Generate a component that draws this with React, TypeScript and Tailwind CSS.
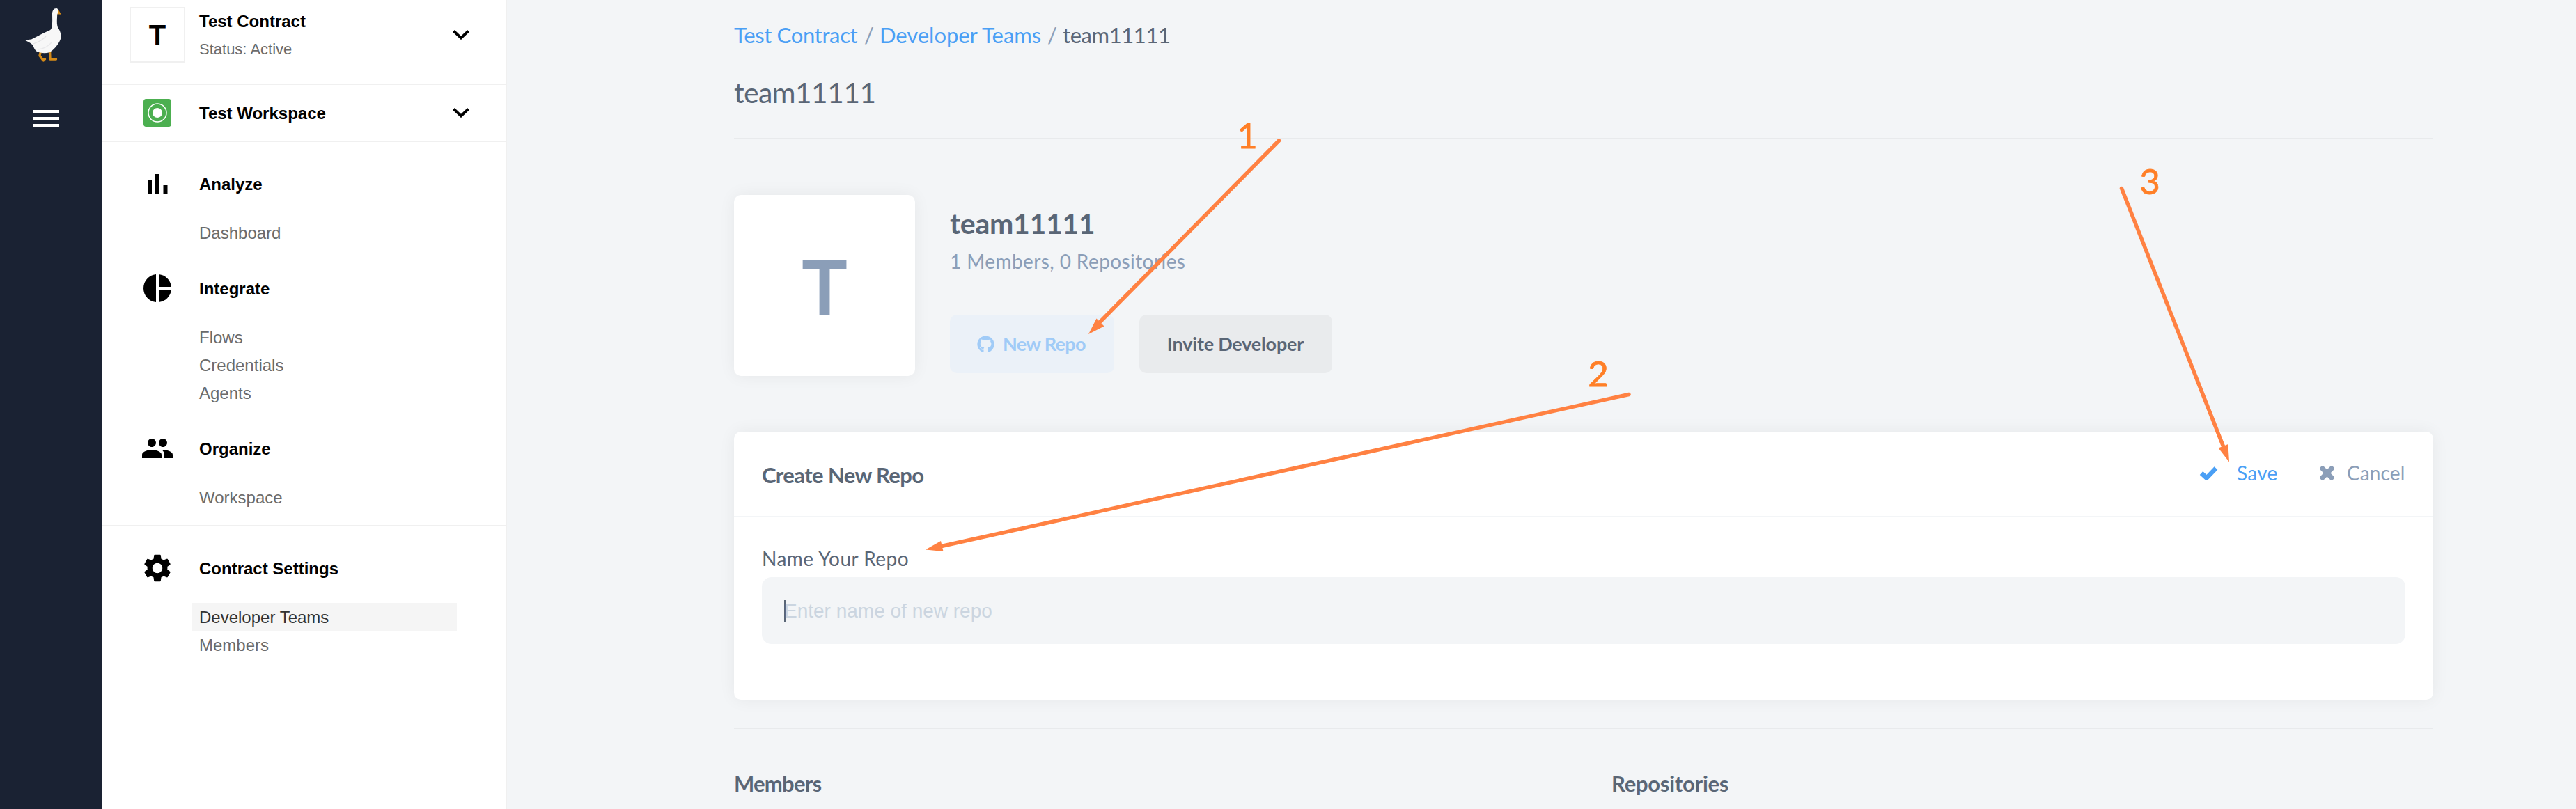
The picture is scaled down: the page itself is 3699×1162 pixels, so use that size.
import React from "react";
import { FaGithub } from "react-icons/fa";
import { MdPieChart, MdPeople, MdSettings } from "react-icons/md";

function Goose() {
  return (
    <svg viewBox="0 0 146 100" className="h-[100px] w-[146px] shrink-0">
      <g fill="none" stroke="#d48a18" strokeWidth="3.4" strokeLinecap="round" strokeLinejoin="round">
        <path d="M58.500 73 L57 80 L61.500 86 L64.500 85 M61 85 L62.500 87" />
        <path d="M71.500 73 L72 85 L80.500 85" />
      </g>
      <path d="M81.500 13.200 L84.500 15 L87.800 20.700 L82 20.300 Z" fill="#d48a18" />
      <path
        d="M81.500 12 C77.500 11.500 75 15 75 20 C75 27 75.500 32 74.500 38 C74 42 72.500 43.500 68 45 C60 48.500 52 53 45 56.500 L35.500 57.500 L43 61.500 L47 64.500 C48.500 68 49.500 71.500 52.500 73.800 C58 76.500 65 77 71 75.300 C77 72 84 64 87 56 C88.300 48 86 44 82.500 38 C81.300 33 82 27 82.200 21 C83.500 17.500 84.500 13 81.500 12 Z"
        fill="#f7f7f7"
      />
      <path d="M48 63 C55 60 60 59 66 52" fill="none" stroke="#e4e4e6" strokeWidth="1.200" />
      <path d="M55 71 C63 70 70 66 75 60" fill="none" stroke="#e9e9eb" strokeWidth="1.200" />
    </svg>
  );
}

function Chevron() {
  return (
    <svg viewBox="0 0 24 14" className="h-[14px] w-6" fill="none" stroke="#000" strokeWidth="3.800">
      <path d="M1.500 1.500 L12 11.500 L22.500 1.500" />
    </svg>
  );
}

function BarsIcon() {
  return (
    <svg viewBox="0 0 48 48" className="size-12">
      <path d="M10 18h6v20h-6zM21 10h6v28h-6zM32.500 26h6v12h-6z" fill="#000" />
    </svg>
  );
}

type Section = { title: string; icon: React.ReactNode; items: string[] };

function NavSection({ title, icon, items, active }: Section & { active?: string }) {
  return (
    <section>
      <div className="flex h-10 items-center text-2xl font-bold text-black">
        <span className="ml-[56px] flex w-[84px] shrink-0 items-center">{icon}</span>
        <span className="pt-[2px]">{title}</span>
      </div>
      <ul className="mt-[30px] mr-[70px] ml-[130px]">
        {items.map((item) => (
          <li
            key={item}
            className={
              item === active
                ? "flex h-10 items-center bg-[#f5f5f5] pt-[2px] pl-[10px] text-2xl text-[#333]"
                : "flex h-10 items-center pt-[2px] pl-[10px] text-2xl text-[#6b6b6b]"
            }
          >
            {item}
          </li>
        ))}
      </ul>
    </section>
  );
}

function Sidebar() {
  return (
    <aside className="flex w-[582px] shrink-0 flex-col border-r-2 border-[#f0f0f0] bg-white font-['Liberation_Sans',sans-serif]">
      <div className="flex h-[122px] border-b-2 border-[#f0f0f0] pt-[10px] pr-[52px] pl-10">
        <div className="flex size-20 items-center justify-center border-2 border-[#f0f0f0] text-[40px] font-bold text-black">T</div>
        <div className="ml-[20px] flex flex-1 flex-col">
          <span className="mt-px h-10 text-2xl leading-10 font-bold text-black">Test Contract</span>
          <span className="h-10 text-[22px] leading-10 text-[#6b6b6b]">Status: Active</span>
        </div>
        <div className="pt-[33px]">
          <Chevron />
        </div>
      </div>
      <div className="flex h-[82px] items-center border-b-2 border-[#f0f0f0] pr-[52px] pl-[60px]">
        <svg viewBox="0 0 40 40" className="size-10">
          <rect width="40" height="40" rx="4" fill="#4caf50" />
          <circle cx="20" cy="20" r="13" fill="none" stroke="#fff" strokeWidth="1.500" />
          <circle cx="20" cy="20" r="7" fill="#fff" />
        </svg>
        <span className="ml-10 flex-1 pt-[2px] text-2xl font-bold text-black">Test Workspace</span>
        <Chevron />
      </div>
      <nav className="flex flex-col gap-10 border-b-2 border-[#f0f0f0] pt-10 pb-5">
        <NavSection title="Analyze" icon={<BarsIcon />} items={["Dashboard"]} />
        <NavSection title="Integrate" icon={<MdPieChart className="size-12" />} items={["Flows", "Credentials", "Agents"]} />
        <NavSection title="Organize" icon={<MdPeople className="size-12" />} items={["Workspace"]} />
      </nav>
      <nav className="pt-10">
        <NavSection
          title="Contract Settings"
          icon={<MdSettings className="size-12" />}
          items={["Developer Teams", "Members"]}
          active="Developer Teams"
        />
      </nav>
    </aside>
  );
}

function CheckIcon() {
  return (
    <svg viewBox="0 0 27 21" className="h-[21px] w-[27px]">
      <path d="M3 10.500 L10.500 17.500 L24 3.500" fill="none" stroke="#4a9ff5" strokeWidth="6.500" />
    </svg>
  );
}

function CrossIcon() {
  return (
    <svg viewBox="0 0 21 21" className="size-[21px]">
      <path d="M4 4 L17 17 M17 4 L4 17" fill="none" stroke="#8b9eb8" strokeWidth="7" strokeLinecap="round" />
    </svg>
  );
}

function Annotations() {
  return (
    <>
      <svg viewBox="0 0 3699 1162" className="pointer-events-none absolute inset-0 h-full w-full">
        <g stroke="#ff8142" strokeWidth="5.500" strokeLinecap="round">
          <path d="M1836.500 202 L1578 464" />
          <path d="M2339 566.500 L1352 784.500" />
          <path d="M3046.500 270.500 L3192.500 641" />
        </g>
        <g fill="#ff8142">
          <path d="M1563 480 L1574.500 457.500 L1585.500 468.500 Z" />
          <path d="M1329 789.500 L1351 777 L1354.500 792 Z" />
          <path d="M3201 663.500 L3185.500 643.500 L3199.500 638 Z" />
        </g>
      </svg>
      <div className="text-center text-[51px] leading-[60px] text-[#ff7f27] [-webkit-text-stroke:0.8px_#ff7f27]">
        <span className="absolute top-[164px] left-[1775px] w-8">1</span>
        <span className="absolute top-[506px] left-[2279px] w-8">2</span>
        <span className="absolute top-[230px] left-[3071px] w-8">3</span>
      </div>
    </>
  );
}

export default function App() {
  return (
    <div className="relative flex h-[1162px] w-[3699px] overflow-hidden bg-[#f3f5f7] font-[Lato,sans-serif] text-[#5a6676]">
      <div className="flex w-[146px] shrink-0 flex-col bg-[#1a2233]">
        <Goose />
        <div className="mt-[58px] ml-12 flex w-[37px] flex-col gap-[6px]">
          <span className="h-1 bg-white" />
          <span className="h-1 bg-white" />
          <span className="h-1 bg-white" />
        </div>
      </div>
      <Sidebar />
      <main className="mr-[205px] ml-[326px] flex flex-1 flex-col">
        <div className="mt-[30px] flex h-10 shrink-0 text-[31px] leading-10 whitespace-nowrap">
          <a className="w-[187px] tracking-[-0.35px] text-[#4a9ff5]">Test Contract</a>
          <span className="w-[22px] text-[#8b9eb8]">/</span>
          <a className="w-[241px] tracking-[-0.05px] text-[#4a9ff5]">Developer Teams</a>
          <span className="w-[22px] text-[#8b9eb8]">/</span>
          <span className="tracking-[-0.4px]">team11111</span>
        </div>
        <h1 className="mt-[33px] h-[60px] shrink-0 text-[41px] leading-[60px] tracking-[-0.65px]">team11111</h1>
        <hr className="mt-[35px] h-[2px] shrink-0 border-0 bg-[#e8eaec]" />

        <div className="mt-20 flex h-[260px] shrink-0">
          <div className="flex size-[260px] items-center justify-center rounded-[10px] bg-white text-[110px] leading-none font-bold text-[#8b9eb8] shadow-[0_0_24px_rgba(0,0,0,0.06)]">
            T
          </div>
          <div className="ml-[50px] pt-[11px]">
            <h2 className="h-[60px] text-[41px] leading-[60px] font-bold tracking-[-0.3px]">team11111</h2>
            <p className="mt-1 h-10 text-[28px] leading-10 tracking-[0.42px] text-[#8b9eb8]">1 Members, 0 Repositories</p>
            <div className="mt-[57px] flex gap-9">
              <button className="flex h-[84px] w-[236px] items-center rounded-[10px] bg-[#ebf1f8] pt-px pl-[39px] text-[27px] font-bold tracking-[-0.65px] whitespace-nowrap text-[#a0cbf7]">
                <FaGithub className="mr-3 size-[25px]" />
                New Repo
              </button>
              <button className="h-[84px] w-[277px] rounded-[10px] bg-[#e9ebed] pt-px pr-px text-[27px] font-bold tracking-[-0.2px] whitespace-nowrap">
                Invite Developer
              </button>
            </div>
          </div>
        </div>

        <section className="mt-20 h-[385px] shrink-0 rounded-[10px] bg-white shadow-[0_0_24px_rgba(0,0,0,0.06)]">
          <header className="flex h-[123px] items-center border-b-2 border-[#f3f5f7] px-10">
            <h3 className="flex-1 pt-[3px] text-[31px] font-bold tracking-[-0.6px]">Create New Repo</h3>
            <div className="flex items-center pb-[3px] text-[28px]">
              <CheckIcon />
              <span className="ml-[27px] w-[60px] tracking-[0.3px] text-[#4a9ff5]">Save</span>
              <span className="ml-[59px] flex">
                <CrossIcon />
              </span>
              <span className="ml-[18px] w-[84px] tracking-[0.1px] text-[#8b9eb8]">Cancel</span>
            </div>
          </header>
          <div className="px-10 pt-[39px]">
            <label className="block h-10 text-[28px] leading-10 tracking-[0.48px]">Name Your Repo</label>
            <div className="mt-[7px] flex h-24 items-center rounded-[14px] bg-[#f3f5f7] pl-8 font-['Liberation_Sans',sans-serif] text-[28px] text-[#cbd5e0]">
              <span className="h-[31px] w-[2px] bg-[#5a6676]" />
              <span className="-ml-[2px] pt-px">Enter name of new repo</span>
            </div>
          </div>
        </section>

        <hr className="mt-10 h-[2px] shrink-0 border-0 bg-[#e8eaec]" />
        <div className="mt-[58px] grid shrink-0 grid-cols-[1260px_1fr] text-[31px] leading-10 font-bold">
          <h3 className="tracking-[-0.75px]">Members</h3>
          <h3 className="tracking-[-0.25px]">Repositories</h3>
        </div>
      </main>
      <Annotations />
    </div>
  );
}
